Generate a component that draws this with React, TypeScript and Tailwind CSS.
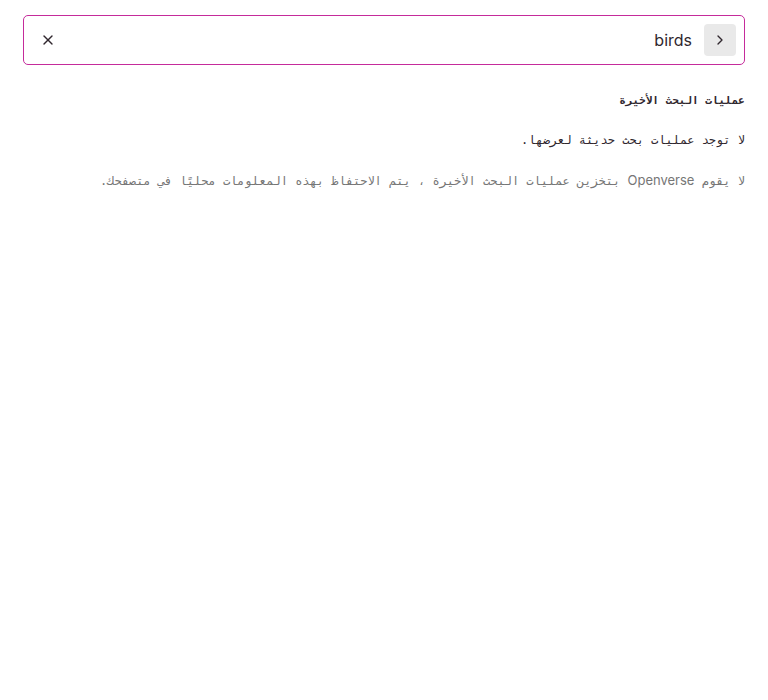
import { X, ChevronRight } from "lucide-react";

export default function App() {
  return (
    <div
      dir="rtl"
      className="min-h-[700px] w-full bg-white px-[23px] pt-[15px] font-['DejaVu_Sans_Mono',monospace] text-[#30272e]"
    >
      <div className="flex h-[50px] items-center rounded-[5px] border-[1.5px] border-[#c52b9b] pr-2 pl-2">
        <button className="flex h-8 w-8 items-center justify-center rounded bg-[#e9e9e9]">
          <ChevronRight className="h-4 w-4 text-[#30272e]" strokeWidth={2} />
        </button>
        <div
          className="flex-1 pr-3 text-right font-['Inter',sans-serif] text-base text-[#30272e]"
          dir="ltr"
        >
          birds
        </div>
        <button className="flex h-8 w-8 items-center justify-center">
          <X className="h-4 w-4 text-[#30272e]" strokeWidth={2} />
        </button>
      </div>
      <div className="mt-[28px] text-[11px] font-bold leading-4">عمليات البحث الأخيرة</div>
      <p className="mt-[23px] text-[12px] leading-4">لا توجد عمليات بحث حديثة لعرضها.</p>
      <p className="mt-[24px] text-[12px] leading-4 text-[#767676]">
        لا يقوم <span className="font-['Inter',sans-serif] text-[13px]">Openverse</span> بتخزين عمليات البحث
        الأخيرة ، يتم الاحتفاظ بهذه المعلومات محليًا في متصفحك.
      </p>
    </div>
  );
}
